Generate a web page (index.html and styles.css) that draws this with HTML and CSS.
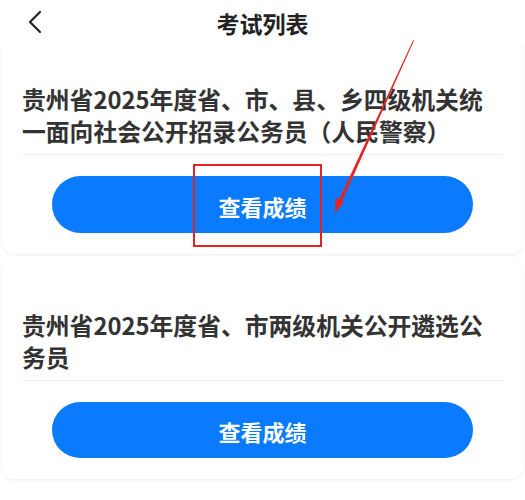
FILE: index.html
```html
<!DOCTYPE html>
<html lang="zh">
<head>
<meta charset="utf-8">
<title>考试列表</title>
<link rel="stylesheet" href="styles.css">
</head>
<body>
<div class="page">
  <header class="topbar">
    <svg class="back" width="16" height="24" viewBox="0 0 16 24"><path d="M13 2 L3 12 L13 22" fill="none" stroke="#222" stroke-width="2.2" stroke-linecap="round" stroke-linejoin="round"/></svg>
    <h1 class="title">考试列表</h1>
  </header>
  <section class="card card-first">
    <div class="card-title"><span class="card-title-text">贵州省2025年度省、市、县、乡四级机关统一面向社会公开招录公务员（人民警察）</span></div>
    <div class="card-action"><button class="btn">查看成绩</button></div>
  </section>
  <section class="card card-second">
    <div class="card-title"><span class="card-title-text">贵州省2025年度省、市两级机关公开遴选公务员</span></div>
    <div class="card-action"><button class="btn btn-second">查看成绩</button></div>
  </section>
  <div class="mark-box"></div>
  <svg class="mark-arrow" width="525" height="500" viewBox="0 0 525 500">
    <path d="M413.2 40 L414 40.5 L340.5 204.5 L337.5 203 Z" fill="#e8231f"/>
    <path d="M335 213 L335.5 198 L344 202 Z" fill="#e8231f"/>
  </svg>
</div>
</body>
</html>
```
FILE: styles.css
```css
* { box-sizing: border-box; }
html, body { margin: 0; padding: 0; background: #fff; }
body {
  font-family: "Noto Sans CJK SC", "Noto Sans", sans-serif;
  width: 525px;
  height: 500px;
  overflow: hidden;
}
.page { position: relative; width: 525px; height: 500px; }
.topbar {
  height: 45px;
  display: flex;
  align-items: center;
  justify-content: center;
  position: relative;
  z-index: 2;
  background: #fff;
}
.back { position: absolute; left: 27px; top: 10px; }
.title {
  margin: 0;
  font-size: 23px;
  font-weight: 700;
  color: #222;
  line-height: 42px;
}
.card {
  position: relative;
  z-index: 1;
  margin: 0 2px;
  background: #fff;
  border-radius: 12px;
  box-shadow: 0 1px 3px rgba(0, 0, 0, 0.08);
  padding: 0 20px 21px 20px;
}
.card-first { padding-top: 78px; margin-top: -40px; }
.card-second { padding-top: 51px; margin-top: 4px; }
.card-title {
  font-size: 23.8px;
  font-weight: 700;
  color: #333;
  line-height: 32px;
  padding-bottom: 7px;
  border-bottom: 1px solid #f1f1f1;
}
.card-title-text { display: block; max-width: 470px; }
.card-action { padding: 21px 30px 0 30px; }
.btn {
  display: block;
  width: 100%;
  height: 57px;
  border: none;
  border-radius: 29px;
  background: #0a7bff;
  color: #fff;
  font-family: "Noto Sans CJK SC", "Noto Sans", sans-serif;
  font-size: 22px;
  font-weight: 700;
  padding: 2px 0 0 0;
}
.btn-second { height: 56px; }
.mark-box {
  position: absolute;
  z-index: 3;
  left: 193px;
  top: 164px;
  width: 129px;
  height: 83px;
  border: 2.5px solid #e52222;
}
.mark-arrow { position: absolute; z-index: 3; left: 0; top: 0; pointer-events: none; }
```
